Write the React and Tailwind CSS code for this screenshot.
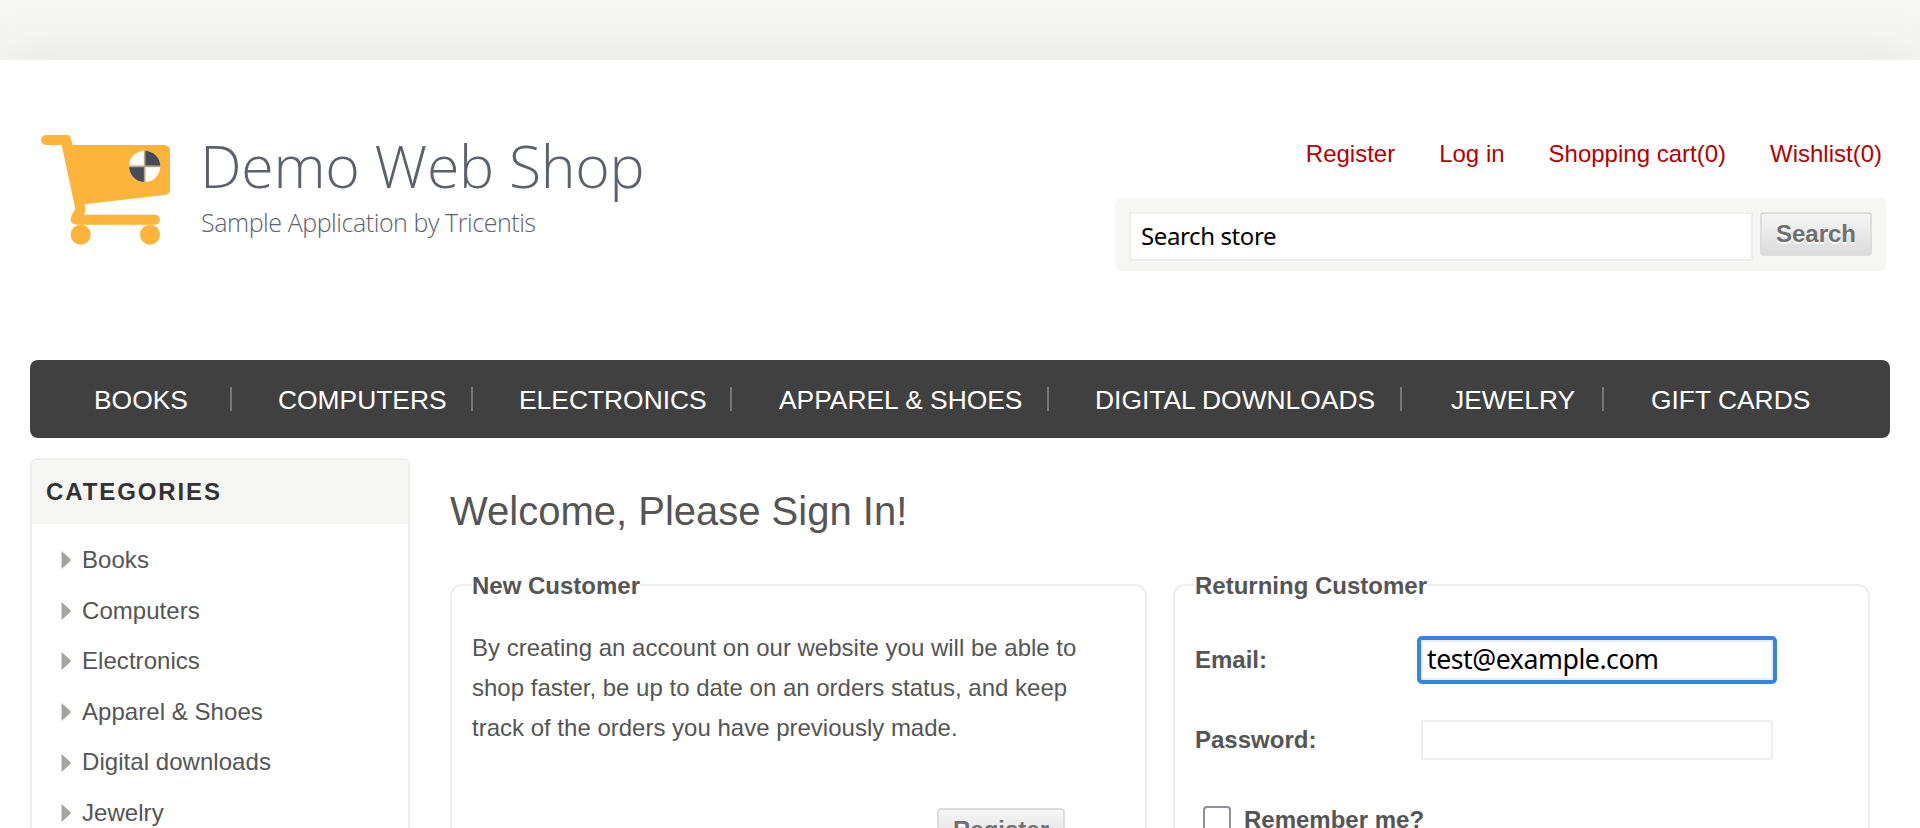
const NAV = [
  { label: 'BOOKS', cell: 'w-[202px] pl-[64px]' },
  { label: 'COMPUTERS', cell: 'w-[241px] pl-[46px]' },
  { label: 'ELECTRONICS', cell: 'w-[259px] pl-[46px]' },
  { label: 'APPAREL & SHOES', cell: 'w-[317px] pl-[47px]' },
  { label: 'DIGITAL DOWNLOADS', cell: 'w-[353px] pl-[46px]' },
  { label: 'JEWELRY', cell: 'w-[202px] pl-[49px]' },
  { label: 'GIFT CARDS', cell: 'w-[240px] pl-[47px]' },
];

const CATEGORIES = ['Books', 'Computers', 'Electronics', 'Apparel & Shoes', 'Digital downloads', 'Jewelry', 'Gift Cards'];

function Cart() {
  return (
    <svg width="160" height="130" viewBox="0 0 480 390" className="block shrink-0">
      <g fill="#fdb43b">
        <path d="M48 30H112Q119 30 121 36L128 60H402Q420 62 420 78V194Q419 208 404 210L163 238Q170 252 162 269H375A15 15 0 0 1 375 299H140Q122 297 122 282Q123 272 136 251L95 60H48A15 15 0 0 1 48 30Z" />
        <circle cx="152" cy="329" r="30" />
        <circle cx="360" cy="329" r="30" />
      </g>
      <circle cx="344" cy="124" r="47" fill="#fff" />
      <path d="M344 124V77A47 47 0 0 1 391 124ZM344 124V171A47 47 0 0 1 297 124Z" fill="#474b57" />
      <path d="M344 77V171M297 124H391" stroke="#b5a68c" strokeWidth="5" />
    </svg>
  );
}

function Header() {
  return (
    <header className="flex h-[300px] justify-between pl-[30px] pr-[34px]">
      <div className="flex pt-[65px]">
        <Cart />
        <div className="pt-[2px] pl-[10px] font-['Open_Sans'] font-light whitespace-nowrap text-[#5d616c]">
          <div className="h-[77px] text-[59px] leading-[76px] tracking-[-0.3px]">Demo Web Shop</div>
          <div className="pl-[1px] text-[25px] leading-[36px] tracking-[-0.44px] text-[#5d616c]">Sample Application by Tricentis</div>
        </div>
      </div>
      <div className="flex w-[771px] flex-col pt-[74px]">
        <nav className="flex justify-end gap-[44px] pr-[4px] leading-[40px] text-[#b50000]">
          <a>Register</a>
          <a>Log in</a>
          <a>Shopping cart(0)</a>
          <a>Wishlist(0)</a>
        </nav>
        <div className="mt-[24px] flex h-[73px] gap-[7px] rounded-[6px] bg-[#f6f6f4] pt-[14px] pl-[14px]">
          <div className="h-[49px] w-[624px] border-2 border-[#eee] bg-white pl-[10px] font-['Noto_Sans'] text-[24px] leading-[44px] tracking-[-0.4px] text-black">
            Search store
          </div>
          <GrayButton label="Search" className="w-[112px]" />
        </div>
      </div>
    </header>
  );
}

function GrayButton({ label, className }) {
  return (
    <button
      className={`block h-[44px] rounded-[4px] border-2 border-[#ddd] bg-linear-to-b from-[#f6f6f6] to-[#dcdcdc] text-center text-[24px] leading-[40px] font-bold text-[#6f6f6f] [text-shadow:0_2px_0_#fff] ${className}`}
    >
      {label}
    </button>
  );
}

function NavBar() {
  return (
    <nav className="mx-[30px] flex h-[78px] items-center rounded-[8px] bg-[#404040] text-[26.4px] text-white">
      {NAV.map((item, i) => (
        <div key={item.label} className={`flex h-[24px] shrink-0 items-center pt-[3px] whitespace-nowrap ${item.cell} ${i < NAV.length - 1 ? 'border-r-2 border-[#777]' : ''}`}>
          {item.label}
        </div>
      ))}
    </nav>
  );
}

function Sidebar() {
  return (
    <aside className="h-[500px] w-[380px] shrink-0 rounded-[8px] border-2 border-[#eee]">
      <h2 className="h-[64px] rounded-t-[8px] bg-[#f6f6f4] pt-[12px] pl-[14px] text-[24px] leading-[40px] font-bold tracking-[1.9px] text-[#333]">CATEGORIES</h2>
      <ul className="pt-[11px] pl-[29px]">
        {CATEGORIES.map((c) => (
          <li key={c} className="flex h-[50.6px] items-center leading-[50.6px]">
            <svg width="10" height="18" viewBox="0 0 10 18" className="mr-[11px]">
              <path d="M0.5 0L9.5 8V10L0.5 18Z" fill="#a5a5a2" />
            </svg>
            <span className="tracking-[0.05px]">{c}</span>
          </li>
        ))}
      </ul>
    </aside>
  );
}

function Panel({ title, children }) {
  return (
    <fieldset className="h-[400px] w-[697px] rounded-[12px] border-2 border-[#eee] pl-[20px]">
      <legend className="h-[28px] pt-px text-[24px] leading-[28px] font-bold">{title}</legend>
      {children}
    </fieldset>
  );
}

function Main() {
  return (
    <main className="pt-[27px] pl-[40px]">
      <h1 className="text-[40px] leading-[52px]">Welcome, Please Sign In!</h1>
      <div className="mt-[34px] flex gap-[26px]">
        <Panel title="New Customer">
          <p className="mt-[29px] w-[640px] leading-[40px]">
            By creating an account on our website you will be able to
            <br />
            shop faster, be up to date on an orders status, and keep
            <br />
            track of the orders you have previously made.
          </p>
          <GrayButton label="Register" className="mt-[60px] ml-[465px] w-[128px]" />
        </Panel>
        <Panel title="Returning Customer">
          <div className="mt-[41px] flex h-[40px] font-bold leading-[40px]">
            <label className="w-[226px]">Email:</label>
            <div className="h-[40px] w-[352px] rounded-[1px] border-2 border-[#eee] pl-[4px] font-['Noto_Sans'] text-[26.67px] leading-[34px] font-normal tracking-[-0.45px] text-black outline-4 outline-[#3584e4]">
              test@example.com
            </div>
          </div>
          <div className="mt-[40px] flex h-[40px] font-bold leading-[40px]">
            <label className="w-[226px]">Password:</label>
            <div className="h-[40px] w-[352px] border-2 border-[#eee]" />
          </div>
          <div className="mt-[40px] flex h-[40px] font-bold leading-[40px]">
            <span className="mt-[6px] mr-[13px] ml-[8px] h-[28px] w-[28px] rounded-[4px] border-2 border-[#8f8f9d] bg-white" />
            <label>Remember me?</label>
          </div>
        </Panel>
      </div>
    </main>
  );
}

export default function App() {
  return (
    <div className="h-[828px] w-[1920px] overflow-hidden bg-[#f6f6f4] pt-[60px] font-['Liberation_Sans',sans-serif] text-[24px] text-[#555]">
      <div className="h-[900px] bg-white shadow-[0_0_60px_rgba(0,0,0,0.08)]">
        <Header />
        <NavBar />
        <div className="flex px-[30px] pt-[20px]">
          <Sidebar />
          <Main />
        </div>
      </div>
    </div>
  );
}
